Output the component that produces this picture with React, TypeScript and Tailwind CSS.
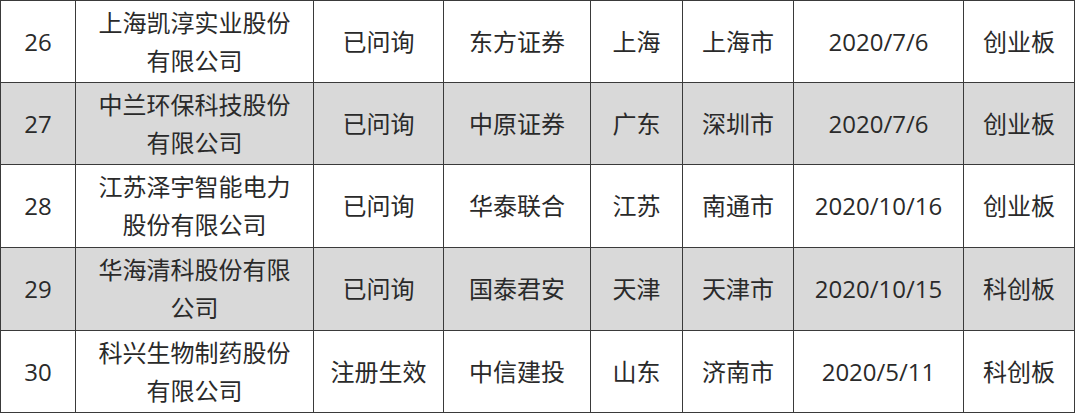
import React from 'react';

interface Row {
  no: string;
  name: string;
  status: string;
  broker: string;
  province: string;
  city: string;
  date: string;
  board: string;
  shaded: boolean;
  h: string;
}

const rows: Row[] = [
  { no: '26', name: '上海凯淳实业股份有限公司', status: '已问询', broker: '东方证券', province: '上海', city: '上海市', date: '2020/7/6', board: '创业板', shaded: false, h: 'h-[82px]' },
  { no: '27', name: '中兰环保科技股份有限公司', status: '已问询', broker: '中原证券', province: '广东', city: '深圳市', date: '2020/7/6', board: '创业板', shaded: true, h: 'h-[82px]' },
  { no: '28', name: '江苏泽宇智能电力股份有限公司', status: '已问询', broker: '华泰联合', province: '江苏', city: '南通市', date: '2020/10/16', board: '创业板', shaded: false, h: 'h-[83px]' },
  { no: '29', name: '华海清科股份有限公司', status: '已问询', broker: '国泰君安', province: '天津', city: '天津市', date: '2020/10/15', board: '科创板', shaded: true, h: 'h-[83px]' },
  { no: '30', name: '科兴生物制药股份有限公司', status: '注册生效', broker: '中信建投', province: '山东', city: '济南市', date: '2020/5/11', board: '科创板', shaded: false, h: 'h-[82px]' },
];

const cell = 'border border-[#3a3a3a] text-center align-middle p-0';

export default function App() {
  return (
    <div className="w-[1080px] h-[413px] bg-white overflow-hidden">
      <table
        className="table-fixed border-collapse w-[1074px] text-[24px] leading-[38px] text-[#2a2a2a]"
        style={{ fontFamily: '"Open Sans", "Noto Sans CJK SC", sans-serif' }}
      >
        <colgroup>
          <col className="w-[75px]" />
          <col className="w-[238px]" />
          <col className="w-[130px]" />
          <col className="w-[147px]" />
          <col className="w-[92px]" />
          <col className="w-[111px]" />
          <col className="w-[170px]" />
          <col className="w-[111px]" />
        </colgroup>
        <tbody>
          {rows.map((r) => (
            <tr key={r.no} className={`${r.h} ${r.shaded ? 'bg-[#d9d9d9]' : 'bg-white'}`}>
              <td className={cell}>{r.no}</td>
              <td className={`${cell} px-[14px]`}>{r.name}</td>
              <td className={cell}>{r.status}</td>
              <td className={cell}>{r.broker}</td>
              <td className={cell}>{r.province}</td>
              <td className={cell}>{r.city}</td>
              <td className={cell}>{r.date}</td>
              <td className={cell}>{r.board}</td>
            </tr>
          ))}
        </tbody>
      </table>
    </div>
  );
}
